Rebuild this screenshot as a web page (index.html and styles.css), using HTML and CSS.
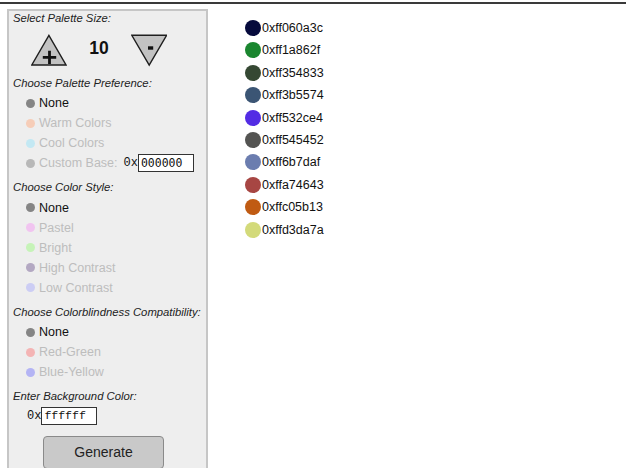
FILE: index.html
```html
<!DOCTYPE html>
<html>
<head>
<meta charset="utf-8">
<title>Palette Generator</title>
<link rel="stylesheet" href="styles.css">
</head>
<body>
<div class="topline"></div>
<div class="app">
  <div class="panel">
    <div class="heading first">Select Palette Size:</div>
    <div class="size-row">
      <svg class="arrow" width="36" height="40" viewBox="0 0 36 40">
        <polygon points="0.8,36 35,36 17.9,6.3" fill="#c2c2c2" stroke="#1e1e1e" stroke-width="1.4" stroke-linejoin="miter"/>
        <path d="M11.8 28.4H25.2M18.5 21.8V35" stroke="#111" stroke-width="2.8" fill="none"/>
      </svg>
      <span class="size-value">10</span>
      <svg class="arrow" width="36" height="40" viewBox="0 0 36 40">
        <polygon points="0.8,6.3 35.6,6.3 18.2,36.2" fill="#c2c2c2" stroke="#1e1e1e" stroke-width="1.4" stroke-linejoin="miter"/>
        <rect x="17" y="17.3" width="5.2" height="3.4" fill="#111"/>
      </svg>
    </div>

    <div class="heading">Choose Palette Preference:</div>
    <div class="option"><span class="dot dot-none"></span>None</div>
    <div class="option off"><span class="dot dot-warm"></span>Warm Colors</div>
    <div class="option off"><span class="dot dot-cool"></span>Cool Colors</div>
    <div class="option off"><span class="dot dot-custom"></span>Custom Base:<span class="prefix">0x</span><input class="hex hex-sans" type="text" value="000000"></div>

    <div class="heading">Choose Color Style:</div>
    <div class="option"><span class="dot dot-none"></span>None</div>
    <div class="option off"><span class="dot dot-pastel"></span>Pastel</div>
    <div class="option off"><span class="dot dot-bright"></span>Bright</div>
    <div class="option off"><span class="dot dot-high"></span>High Contrast</div>
    <div class="option off"><span class="dot dot-low"></span>Low Contrast</div>

    <div class="heading">Choose Colorblindness Compatibility:</div>
    <div class="option"><span class="dot dot-none"></span>None</div>
    <div class="option off"><span class="dot dot-rg"></span>Red-Green</div>
    <div class="option off"><span class="dot dot-by"></span>Blue-Yellow</div>

    <div class="heading">Enter Background Color:</div>
    <div class="bg-row"><span class="prefix">0x</span><input class="hex hex-serif" type="text" value="ffffff"></div>

    <button class="generate" type="button">Generate</button>
  </div>

  <ul class="swatches">
    <li><span class="swatch" style="background:#060a3c"></span>0xff060a3c</li>
    <li><span class="swatch" style="background:#1a862f"></span>0xff1a862f</li>
    <li><span class="swatch" style="background:#354833"></span>0xff354833</li>
    <li><span class="swatch" style="background:#3b5574"></span>0xff3b5574</li>
    <li><span class="swatch" style="background:#532ce4"></span>0xff532ce4</li>
    <li><span class="swatch" style="background:#545452"></span>0xff545452</li>
    <li><span class="swatch" style="background:#6b7daf"></span>0xff6b7daf</li>
    <li><span class="swatch" style="background:#a74643"></span>0xffa74643</li>
    <li><span class="swatch" style="background:#c05b13"></span>0xffc05b13</li>
    <li><span class="swatch" style="background:#d3da7a"></span>0xffd3da7a</li>
  </ul>
</div>
</body>
</html>
```

FILE: styles.css
```css
html, body {
  margin: 0;
  background: #ffffff;
  font-family: "Liberation Sans", Arial, sans-serif;
  color: #111;
  overflow: hidden;
}

.topline {
  width: 626px;
  height: 2px;
  margin-top: 2px;
  background: #3a3a3a;
}

.app {
  display: flex;
  align-items: flex-start;
  margin-top: 5px;
}

/* left control panel */
.panel {
  margin-left: 7px;
  width: 193px;
  height: 480px;
  padding: 0 0 0 4px;
  background: #eeeeee;
  border: 2px solid #c6c6c6;
  border-bottom: none;
}

.heading {
  font-size: 11.3px;
  font-style: italic;
  line-height: 14px;
  color: #222;
  margin: 7px 0 3.5px;
  white-space: nowrap;
}

.heading.first {
  margin-top: 0;
}

.size-row {
  display: flex;
  align-items: center;
  height: 40px;
  padding-left: 18px;
}

.arrow {
  display: block;
}

.size-value {
  width: 64px;
  text-align: center;
  font-size: 17.5px;
  font-weight: bold;
  color: #111;
}

.option {
  display: flex;
  align-items: center;
  height: 20px;
  padding-left: 13px;
  font-size: 12.5px;
  color: #111;
  white-space: nowrap;
}

.option.off {
  color: #bdbdbd;
}

.dot {
  width: 9px;
  height: 9px;
  border-radius: 50%;
  margin-right: 4px;
  flex: none;
}

.dot-none   { background: #858585; }
.dot-warm   { background: #f6cdb8; }
.dot-cool   { background: #c3e8f3; }
.dot-custom { background: #b8b8b8; }
.dot-pastel { background: #f1c4f0; }
.dot-bright { background: #c6f3b8; }
.dot-high   { background: #b3a8c2; }
.dot-low    { background: #cccdf4; }
.dot-rg     { background: #f4b4b4; }
.dot-by     { background: #b4b4f4; }

.prefix {
  font-family: "Liberation Mono", "Courier New", monospace;
  font-size: 12px;
  color: #111;
  margin-left: 6px;
}

.hex {
  box-sizing: border-box;
  width: 56px;
  height: 18px;
  margin: 0;
  padding: 0 2px;
  border: 1px solid #333;
  background: #fff;
  color: #111;
  outline: none;
}

.hex-sans {
  font-family: "DejaVu Sans Mono", monospace;
  font-size: 11.5px;
}

.hex-serif {
  font-family: "Liberation Mono", "Courier New", monospace;
  font-size: 11.5px;
}

.bg-row {
  display: flex;
  align-items: center;
  height: 18px;
  padding-left: 8px;
}

.generate {
  display: block;
  box-sizing: border-box;
  width: 121px;
  height: 33px;
  margin: 11px 0 0 30px;
  padding: 0;
  background: #c9c9c9;
  border: 1px solid #8a8a8a;
  border-radius: 4px;
  font-family: "Liberation Sans", Arial, sans-serif;
  font-size: 14px;
  color: #222;
}

/* generated palette list */
.swatches {
  list-style: none;
  margin: 7.8px 0 0 37px;
  padding: 0;
}

.swatches li {
  display: flex;
  align-items: center;
  height: 22.4px;
  font-size: 12.5px;
  color: #111;
}

.swatch {
  width: 16px;
  height: 16px;
  border-radius: 50%;
  margin-right: 1px;
  flex: none;
}
```
